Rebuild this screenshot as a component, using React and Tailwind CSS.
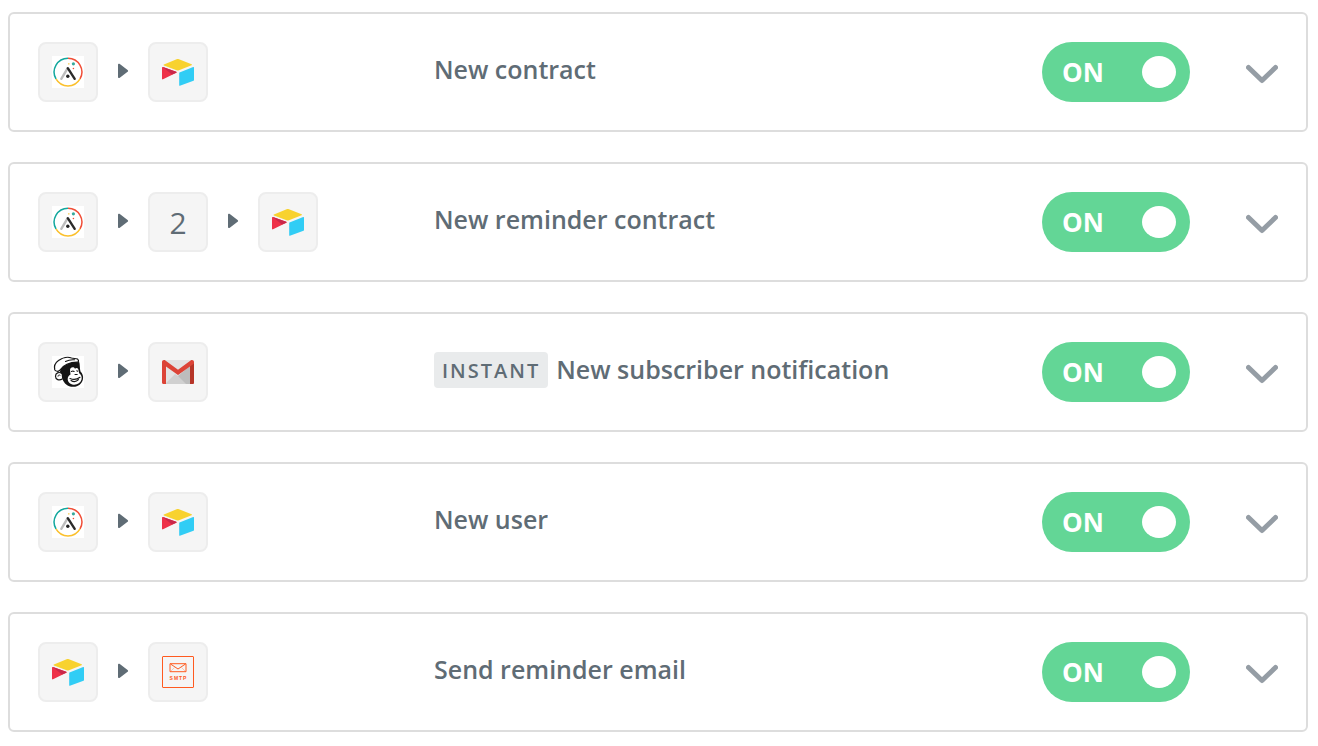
import { useState } from 'react';

const zaps = [
  { id: 1, title: 'New contract', steps: ['acuity', 'airtable'] },
  { id: 2, title: 'New reminder contract', steps: ['acuity', '2', 'airtable'] },
  { id: 3, title: 'New subscriber notification', steps: ['mailchimp', 'gmail'], instant: true },
  { id: 4, title: 'New user', steps: ['acuity', 'airtable'] },
  { id: 5, title: 'Send reminder email', steps: ['airtable', 'smtp'] },
];

function CompassIcon() {
  return (
    <svg className="w-8 h-8" viewBox="0 0 32 32" fill="none" aria-hidden="true">
      <path fill="#fff" d="M0 0h32v32H0z" />
      <path stroke="#f04e37" strokeWidth="1.5" d="M16 2.2A13.8 13.8 0 0 1 28 22.9" />
      <path stroke="#fbc02d" strokeWidth="1.5" d="M28 22.9A13.8 13.8 0 0 1 4 22.9" />
      <path stroke="#12a79d" strokeWidth="1.5" d="M4 22.9A13.8 13.8 0 0 1 16 2.2" />
      <path stroke="#bdbdbd" strokeWidth="2.4" strokeLinecap="round" d="M9.3 22.8 15.4 12.6" />
      <path stroke="#2b2b2b" strokeWidth="2.4" strokeLinecap="round" d="M15.8 12.2 22.7 22.8" />
      <circle cx="15.8" cy="20.2" r="1.7" fill="#222" />
      <circle cx="21.4" cy="7.8" r="1.6" fill="#35a99c" />
      <circle cx="16.8" cy="7.8" r="0.9" fill="#fbd36b" />
      <circle cx="21.4" cy="12.5" r="0.8" fill="#f04e37" />
    </svg>
  );
}

function AirtableIcon() {
  return (
    <svg className="w-8 h-8" viewBox="0 0 32 32" aria-hidden="true">
      <path fill="#f8d22f" d="M1.9 8.6 14.6 3.3c.8-.3 1.6-.3 2.4 0l12.6 5c.5.2.5.7 0 .9L17 14.2c-.8.3-1.6.3-2.4 0L1.9 9.5c-.5-.2-.5-.7 0-.9z" />
      <path fill="#31cdf5" d="M17.5 16.4 31.2 11c.4-.2.8.1.8.5v12.6c0 .3-.2.5-.5.6l-13.6 5.1c-.4.2-.7-.1-.7-.5V17c0-.3.1-.5.3-.6z" />
      <path fill="#ee3148" d="M.3 11.2c.2-.2.4-.3.7-.2l13.2 4.8c.5.2.5.7.1.9L1 23.3c-.5.2-1 0-1-.6V11.6c0-.2.1-.3.3-.4z" />
      <path fill="#c9294a" d="M.6 11c.2-.1.3-.1.4 0l13.2 4.8c.5.2.5.7.1.9L10 18.6z" />
    </svg>
  );
}

function MailchimpIcon() {
  return (
    <svg className="w-8 h-8" viewBox="0 0 32 32" fill="none" strokeLinecap="round" strokeLinejoin="round" aria-hidden="true">
      <path fill="#fff" d="M0 0h32v32H0z" />
      {/* head */}
      <path fill="#151515" d="M8 15C10 9 18 5.500 27 5.500c1.200 3 .5 6.500 1.500 10 2 2 3 4.500 2.500 7.500C30 28 26 31 21 30.800c-5.500 0-9-3.300-10.500-7.800L8.500 22z" />
      {/* face and muzzle */}
      <path fill="#fff" d="M18 13.500c.8-2.500 3.700-3 5-.8 1.300-1.500 3.500-.7 3.500 1.500l.7 3c2 1.500 3 3.800 2.300 6.300-1 3.500-4.200 5.500-8 5.200-3.500-.3-5.800-2.700-5.800-5.700 0-2.200 1.300-3.500 2.800-4.500z" />
      <path stroke="#151515" strokeWidth="1.100" d="M19.500 15.500c1-.7 1.800-.7 2.600 0M24.800 14.800l.8.4M23 18.500h2.200M18 22.500c3.500 1.500 7 1 10-1.200M19 24.500c2.300 1.500 5.500 1.200 7.500-.8" />
      {/* ear */}
      <path fill="#fff" stroke="#151515" strokeWidth="1.200" d="M9.500 17.300C7 15.500 3.500 17 3.500 20.200c0 3.300 3.700 4.800 6.700 2.800" />
      <path stroke="#151515" strokeWidth="1" d="M8 19.200c-1.200-.6-2 0-2 1" />
      {/* cap */}
      <path fill="#fff" stroke="#151515" strokeWidth="1.200" d="M2.800 14C2 11 3 7 6.500 4.500 10.500 1.500 16 .5 19.500 2c2 .5 4 .5 6 1 1 .7 1.200 2 .8 3.200-7.500-.2-14.500 2.300-18.800 8.300-1.200 1.200-3.500 1-4.700-.5z" />
      <path stroke="#151515" strokeWidth="1.100" d="M13.500 5.500C16 4.200 19 3.500 22.500 3.800" />
    </svg>
  );
}

function GmailIcon() {
  return (
    <svg className="w-8 h-8" viewBox="0 0 32 32" aria-hidden="true">
      <path fill="#e3e3e3" d="M2 4h28v24H2z" />
      <path fill="#d0d0d0" d="M3 28 13 18l3 2 10-8 4 16z" />
      <path fill="#bdbdbd" d="M16 20 28 10v18h-4z" />
      <path fill="#e3e3e3" d="M3 4h26L16 14z" />
      <path fill="#dc4437" d="M0 6c0-1.200.800-2 2-2h.7L16 13.800 29.300 4h.7c1.200 0 2 .800 2 2v20.500c0 .900-.600 1.500-1.500 1.500H28V10.400L16 19 4 10.400V28H1.500C.600 28 0 27.400 0 26.500z" />
      <path fill="#b63528" d="M28 10.400 32 7.400v19.100c0 .900-.600 1.500-1.500 1.500H28z" />
    </svg>
  );
}

function SmtpIcon() {
  return (
    <svg className="w-8 h-8" viewBox="0 0 32 32" fill="none" stroke="#ff5a1f" aria-hidden="true">
      <rect x="0.500" y="0.500" width="31" height="31" rx="0.500" />
      <path d="M8 7.700h16v8H8zM8.500 8 16 13l7.500-5" />
      <path strokeOpacity="0.300" d="M8.500 15.500l4-4M23.500 15.500l-4-4" />
      <text
        x="16.500"
        y="24"
        textAnchor="middle"
        fill="#ff5a1f"
        stroke="none"
        className="font-['Liberation_Sans'] text-[5px] font-bold tracking-[1px]"
      >
        SMTP
      </text>
    </svg>
  );
}

const icons = {
  acuity: CompassIcon,
  airtable: AirtableIcon,
  mailchimp: MailchimpIcon,
  gmail: GmailIcon,
  smtp: SmtpIcon,
};

function Step({ name }) {
  const Icon = icons[name];
  return (
    <span className="w-15 h-15 flex items-center justify-center rounded-lg border-2 border-[#ededed] bg-[#f5f5f5] text-[30px]">
      {Icon ? <Icon /> : name}
    </span>
  );
}

function Arrow() {
  return (
    <svg className="w-3 h-4 ml-5 mr-[18px] mb-[2px]" viewBox="0 0 12 16" fill="#5f6c75" aria-hidden="true">
      <path d="M0 1.800C0 .800 1 .500 1.800 1l7.800 6c.7.500.7 1.300 0 1.800l-7.800 6c-.8.500-1.800.2-1.800-.8z" />
    </svg>
  );
}

function Toggle({ label }) {
  const [on, setOn] = useState(true);
  return (
    <label
      className={`relative flex items-center justify-between w-37 h-15 pl-5 pr-[14px] rounded-full text-white text-[26px] font-bold cursor-pointer ${
        on ? 'bg-[#63d696]' : 'bg-gray-400'
      }`}
    >
      <input
        type="checkbox"
        role="switch"
        aria-label={label}
        className="sr-only"
        checked={on}
        onChange={() => setOn(!on)}
      />
      <span>{on ? 'ON' : 'OFF'}</span>
      <span className="w-[34px] h-8 rounded-[50%] bg-white"></span>
    </label>
  );
}

function ZapRow({ zap }) {
  return (
    <li className="flex items-center p-7 border-2 border-[#dddddd] rounded-md">
      <div className="flex items-center w-99 shrink-0">
        {zap.steps.map((step, i) => (
          <div key={i} className="flex items-center">
            {i > 0 && <Arrow />}
            <Step name={step} />
          </div>
        ))}
      </div>
      <div className="flex items-start flex-1 min-w-0 min-h-10 pb-1">
        {zap.instant && (
          <span className="mr-2 px-2 h-9 leading-[38px] rounded bg-[#e9ebec] text-[20px] font-semibold tracking-[2px]">
            INSTANT
          </span>
        )}
        <h2 className="text-[25px] leading-[34px] font-semibold truncate">{zap.title}</h2>
      </div>
      <Toggle label={zap.title} />
      <button type="button" aria-label={`Show details for ${zap.title}`} className="ml-14 mt-1 cursor-pointer">
        <svg className="w-8 h-5" viewBox="0 0 32 20" fill="none" stroke="#959da5" strokeWidth="5" strokeLinecap="round" strokeLinejoin="round" aria-hidden="true">
          <path d="M2.500 3.500 16 16.500 29.500 3.500" />
        </svg>
      </button>
    </li>
  );
}

export default function App() {
  return (
    <main className="min-h-screen bg-white pt-3 pb-[14px] pl-2 pr-[10px] font-['Open_Sans',sans-serif] text-[#5f6c75]">
      <ul className="flex flex-col gap-[30px]">
        {zaps.map((zap) => (
          <ZapRow key={zap.id} zap={zap} />
        ))}
      </ul>
    </main>
  );
}
